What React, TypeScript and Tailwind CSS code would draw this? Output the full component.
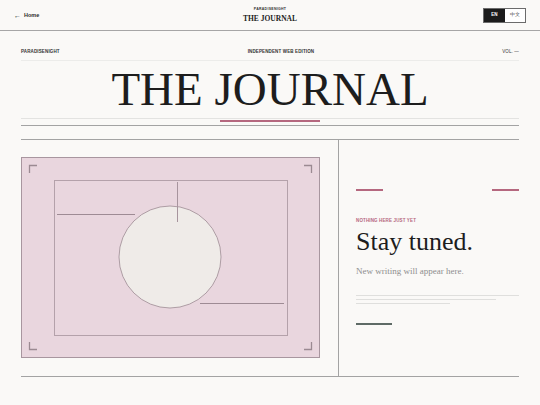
import React from 'react';

const sans = "font-['Liberation_Sans',Arial,sans-serif]";
const serif = "font-['Liberation_Serif','Times_New_Roman',serif]";

const Header: React.FC = () => (
  <header className="grid h-[31px] grid-cols-[1fr_auto_1fr] items-center border-b border-[#a6a6a6] px-[14px]">
    <div className={`${sans} flex items-center gap-[3px] text-[5.5px] font-bold text-[#2b2b2b]`}>
      <span className="text-[7px] font-normal leading-none">←</span>
      <span>Home</span>
    </div>
    <div className="flex flex-col items-center">
      <span className={`${sans} text-[3.5px] font-bold leading-none tracking-[0.08em] text-[#333]`}>PARADISENIGHT</span>
      <span className={`${serif} mt-[3px] text-[7.5px] font-bold leading-none text-[#1c1c1c]`}>THE JOURNAL</span>
    </div>
    <div className="flex justify-end">
      <div className={`${sans} flex h-[15px] border border-[#6b6b6b] text-[4.5px]`}>
        <span className="flex w-[21px] items-center justify-center bg-[#1b1b1b] font-bold text-white">EN</span>
        <span className="flex w-[20px] items-center justify-center bg-white text-[#444]">中文</span>
      </div>
    </div>
  </header>
);

const Illustration: React.FC = () => (
  <div className="h-[201px] w-[299px] border border-[#a8969f] bg-[#e9d6de]">
    <svg width="297" height="199" viewBox="1 1 297 199" className="block">
      <rect x="33.5" y="23.5" width="233" height="155" fill="none" stroke="#b4a1aa" strokeWidth="1" />
      <circle cx="149" cy="100" r="51" fill="#efebe8" stroke="#9d8a93" strokeWidth="0.8" />
      <line x1="36" y1="57.5" x2="114" y2="57.5" stroke="#9e8b94" strokeWidth="1" />
      <line x1="156.5" y1="25" x2="156.5" y2="65" stroke="#a7949d" strokeWidth="1" />
      <line x1="179" y1="146.5" x2="263" y2="146.5" stroke="#9e8b94" strokeWidth="1" />
      <g fill="none" stroke="#9b8a92" strokeWidth="1.3">
        <path d="M8.5 16 V8.5 H16" />
        <path d="M283 8.5 H290.5 V16" />
        <path d="M8.5 185 V192.5 H16" />
        <path d="M283 192.5 H290.5 V185" />
      </g>
    </svg>
  </div>
);

export default function App() {
  return (
    <div className={`min-h-screen bg-[#faf9f7] ${serif}`}>
      <Header />
      <main className="px-[21px]">
        <div className="mt-[18px] border-b border-[#ececea] pb-[5px]">
          <div className={`${sans} flex h-[6px] items-center justify-between text-[4.5px] font-bold tracking-[0.03em] text-[#333]`}>
            <span>PARADISENIGHT</span>
            <span>INDEPENDENT WEB EDITION</span>
            <span className="font-normal">VOL. —</span>
          </div>
        </div>

        <h1 className="mt-[5px] text-center text-[47px] leading-none text-[#1d1d1d]">THE JOURNAL</h1>
        <div className="mt-[5px] border-t border-[#e3e3e1]" />
        <div className="mx-auto mt-[1px] h-[2px] w-[100px] bg-[#b5687f]" />
        <div className="mt-[3px] border-t border-[#a3a3a3]" />

        <section className="mt-[13px] grid grid-cols-[318px_1fr] border-y border-[#a3a3a3]">
          <div className="border-r border-[#a3a3a3] pt-[17px] pb-[18px]">
            <Illustration />
          </div>
          <div className="pl-[17px] pr-[1px] pt-[49px]">
            <div className="flex justify-between">
              <div className="h-[2px] w-[27px] bg-[#b5687f]" />
              <div className="h-[2px] w-[27px] bg-[#b5687f]" />
            </div>
            <div className={`${sans} mt-[27px] h-[6px] text-[4.5px] font-bold leading-[6px] tracking-[0.03em] text-[#b5687f]`}>
              NOTHING HERE JUST YET
            </div>
            <h2 className="mt-[5px] text-[26px] leading-none text-[#1d1d1d]">Stay tuned.</h2>
            <p className="mt-[11px] text-[9px] leading-[10px] text-[#8e8e8e]">New writing will appear here.</p>
            <div className="mt-[19px] h-px w-[163px] bg-[#dfdfdd]" />
            <div className="mt-[3px] h-px w-[140px] bg-[#dfdfdd]" />
            <div className="mt-[3px] h-px w-[94px] bg-[#dfdfdd]" />
            <div className="mt-[19px] h-[2px] w-[36px] bg-[#5e6b66]" />
          </div>
        </section>
      </main>
    </div>
  );
}
